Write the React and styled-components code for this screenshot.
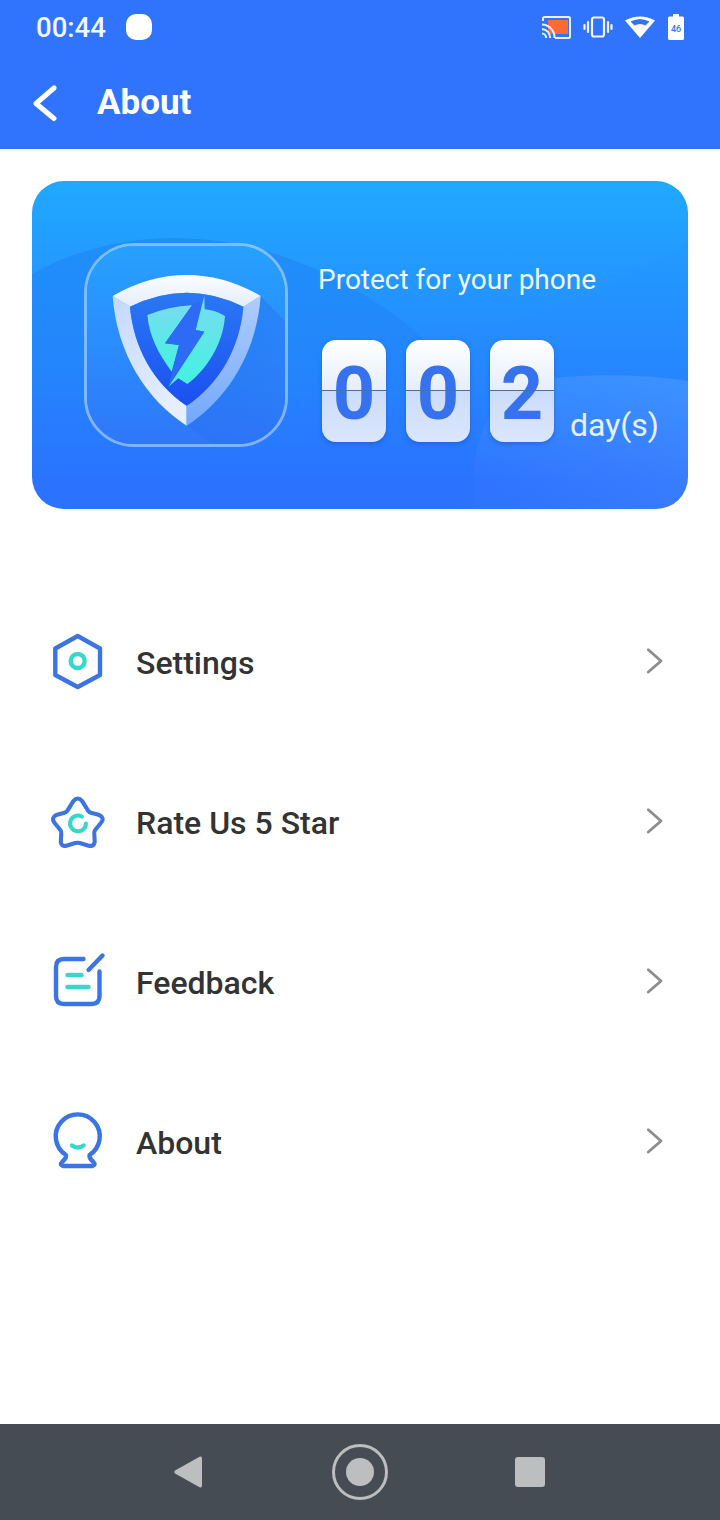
import React from 'react';
import styled, { createGlobalStyle } from 'styled-components';

const GlobalStyle = createGlobalStyle`
  html, body {
    margin: 0;
    padding: 0;
    background: #fff;
    font-family: Roboto, "Liberation Sans", sans-serif;
  }
`;

const Screen = styled.div`
  width: 720px;
  height: 1520px;
  display: flex;
  flex-direction: column;
  overflow: hidden;
  background: #fff;
`;

const Header = styled.header`
  height: 149px;
  background: #3074fe;
  color: #fff;
  display: flex;
  flex-direction: column;
`;

const StatusBar = styled.div`
  height: 56px;
  display: flex;
  align-items: center;
  padding: 0 35px 2px 36px;
  box-sizing: border-box;
`;

const Clock = styled.span`
  font-size: 27.5px;
  font-weight: 500;
  color: #f2f7ff;
`;

const Dot = styled.span`
  width: 26px;
  height: 26px;
  border-radius: 10px;
  background: #fff;
  margin-left: 20px;
`;

const StatusIcons = styled.div`
  margin-left: auto;
  display: flex;
  align-items: center;
  gap: 12px;
`;

const TitleRow = styled.div`
  height: 93px;
  display: flex;
  align-items: center;
  padding: 0 0 1px 30px;
  box-sizing: border-box;
`;

const BackIcon = styled.svg`
  display: block;
  width: 30px;
  height: 40px;
`;

const Title = styled.h1`
  margin: 0 0 0 37px;
  font-size: 35px;
  font-weight: 700;
`;

const Card = styled.section`
  position: relative;
  margin: 32px 32px 0;
  height: 328px;
  border-radius: 32px;
  overflow: hidden;
  background: linear-gradient(180deg, #20a9ff 0%, #2a72ff 92%);
  display: flex;
  padding: 62px 0 0 52px;
  box-sizing: border-box;
  flex-shrink: 0;
`;

const CardDecor = styled.svg`
  position: absolute;
  left: 0;
  top: 0;
  width: 656px;
  height: 328px;
`;

const LogoBox = styled.div`
  position: relative;
  width: 204px;
  height: 204px;
  box-sizing: border-box;
  border-radius: 50px;
  border: 3px solid rgba(255, 255, 255, 0.42);
  overflow: hidden;
  flex-shrink: 0;
`;

const Logo = styled.svg`
  display: block;
  width: 204px;
  height: 204px;
  margin: -3px;
`;

const CardBody = styled.div`
  position: relative;
  margin-left: 30px;
  padding-top: 20px;
`;

const Protect = styled.div`
  font-size: 28px;
  line-height: 34px;
  color: #eef7ff;
`;

const Counter = styled.div`
  display: flex;
  margin: 43px 0 0 4px;
`;

const Flip = styled.div`
  position: relative;
  width: 64px;
  height: 102px;
  margin-right: 20px;
  border-radius: 14px;
  background: linear-gradient(180deg, #ffffff 0%, #e6edfc 49%, #cbdcfa 49.5%, #dbe6fd 100%);
  box-shadow: 0 2px 4px rgba(20, 60, 160, 0.35);
  color: #3671ee;
  font-size: 74px;
  font-weight: 700;
  line-height: 108px;
  text-align: center;

  &::after {
    content: '';
    position: absolute;
    left: 0;
    right: 0;
    top: 50px;
    height: 1px;
    background: #4f6f9f;
  }
`;

const Days = styled.span`
  align-self: flex-end;
  margin: 0 0 -3px -4px;
  font-size: 32px;
  line-height: 40px;
  color: #e6f1ff;
`;

const Menu = styled.nav`
  margin-top: 73px;
  display: flex;
  flex-direction: column;
`;

const Row = styled.div`
  height: 160px;
  display: flex;
  align-items: center;
  padding: 0 50px 0 40px;
`;

const RowIcon = styled.svg`
  display: block;
  width: 80px;
  height: 80px;
  flex-shrink: 0;
  fill: none;
  stroke-width: 4.4;
  stroke-linecap: round;
  stroke-linejoin: round;
`;

const RowLabel = styled.span`
  margin-left: 16px;
  font-size: 32px;
  font-weight: 500;
  color: #333;
  padding-top: 2px;
`;

const RowChevron = styled.svg`
  display: block;
  margin-left: auto;
  width: 30px;
  height: 30px;
  fill: none;
  stroke: #8b8d90;
  stroke-width: 2.8;
  stroke-linecap: round;
  stroke-linejoin: round;
`;

const NavBar = styled.footer`
  margin-top: auto;
  height: 96px;
  background: #454c53;
  display: flex;
  align-items: center;
  padding-left: 173px;
`;

const NavIcon = styled.svg`
  display: block;
  fill: #bcbebf;
  margin-left: ${props => props.$offset || 0}px;
`;

const BLUE = '#3b74e3';
const TEAL = '#36d9c9';

const CastIcon = () => (
  <svg width="30" height="24" viewBox="0 0 30 24">
    <rect x="7" y="5" width="20" height="14" fill="#ff6b35" />
    <path d="M2 6V3.5A1.5 1.5 0 0 1 3.5 2h24A1.5 1.5 0 0 1 29 3.5v18a1.5 1.5 0 0 1-1.5 1.5H14" fill="none" stroke="#e9f1ff" strokeWidth="2" />
    <path d="M1 9.5a13 13 0 0 1 12.5 13.5M1 14a9 9 0 0 1 8.2 9M1 18.5a4.5 4.5 0 0 1 4.2 4.5" fill="none" stroke="#e9f1ff" strokeWidth="2" />
  </svg>
);

const VibrateIcon = () => (
  <svg width="30" height="24" viewBox="0 0 30 24" fill="none" stroke="#f0f5ff" strokeWidth="2.2" strokeLinecap="round">
    <rect x="9" y="2.5" width="12" height="19" rx="2" />
    <path d="M5 7v10M25 7v10M1.5 10v4M28.5 10v4" />
  </svg>
);

const WifiIcon = () => (
  <svg width="30" height="24" viewBox="0 0 30 24">
    <path
      d="M0 5.5Q15 -2.500 30 5.500L15 23ZM5.500 6.500L9.500 10.500Q15 7.500 20.500 10.500L24.500 6.500Q15 1.500 5.500 6.500Z"
      fill="#fff"
      fillRule="evenodd"
    />
  </svg>
);

const BatteryIcon = () => (
  <svg width="18" height="26" viewBox="0 0 18 26">
    <path d="M6 0h6v2.500h3.500A1.500 1.500 0 0 1 17 4v20.500a1.500 1.500 0 0 1-1.500 1.500h-13A1.500 1.500 0 0 1 1 24.500V4a1.500 1.500 0 0 1 1.500-1.500H6Z" fill="#fff" />
    <text x="9" y="18" textAnchor="middle" fontSize="9" fontWeight="500" fontFamily="Roboto, sans-serif" fill="#3074fe">46</text>
  </svg>
);

const Chevron = () => (
  <RowChevron viewBox="0 0 30 30">
    <path d="M8.300 2.800L21 14L8.300 25" />
  </RowChevron>
);

const SettingsIcon = () => (
  <RowIcon viewBox="0 0 80 80">
    <path d="M37.700 14L60 26.500V53L37.700 65L15.300 53V26.500Z" stroke={BLUE} />
    <circle cx="37.700" cy="39" r="7" stroke={TEAL} />
  </RowIcon>
);

const StarIcon = () => (
  <RowIcon viewBox="0 0 80 80">
    <g transform="translate(37.700 40.500) scale(0.93) translate(-37.700 -40)">
      <path d="M33 17Q37.700 11.500 42.500 17L49 27.500Q50 29 52 29.500L61 32Q67 35 63 40L56.500 48Q55 50 55.500 52L56 61Q55 66 49.500 65L40 62Q37.700 61.500 35 62L25.500 65Q20 66 19.500 61L20 52Q20.500 50 19 48L12.500 40Q9 35 14.500 32L23.500 29.500Q25.500 29 26.500 27.500Z" stroke={BLUE} />
      <path d="M42 33.500A8.500 8.500 0 1 0 46.500 41" stroke={TEAL} />
    </g>
  </RowIcon>
);

const FeedbackIcon = () => (
  <RowIcon viewBox="0 0 80 80">
    <path d="M43.500 17H24Q16 17 16 25V54Q16 62 24 62H51.500Q59.500 62 59.500 54V29.500" stroke={BLUE} />
    <path d="M48.500 28L62.500 13.500" stroke={BLUE} />
    <path d="M27.500 33H41.500M27.500 45H48.500" stroke={TEAL} />
  </RowIcon>
);

const AboutIcon = () => (
  <RowIcon viewBox="0 0 80 80">
    <g transform="translate(0 1)">
      <path d="M26 52A22 22 0 1 1 49.500 52Q49 55 53 58.500Q56.500 62 52 63H23.500Q19 62 22.500 58.500Q26.500 55 26 52Z" stroke={BLUE} />
      <path d="M32 42.500Q37.700 46.500 43.500 42.500" stroke={TEAL} />
    </g>
  </RowIcon>
);

const ShieldLogo = () => (
  <Logo viewBox="42 39 612 612">
    <defs>
      <linearGradient id="boxFill" x1="0" y1="0" x2="0" y2="1">
        <stop offset="0" stopColor="#26a2ff" />
        <stop offset="1" stopColor="#2f76fb" />
      </linearGradient>
      <linearGradient id="shadowFill" x1="0" y1="0" x2="1" y2="1">
        <stop offset="0" stopColor="#1f6fe8" stopOpacity="0.6" />
        <stop offset="1" stopColor="#2a6cf0" stopOpacity="0.15" />
      </linearGradient>
      <linearGradient id="leftFacet" x1="0" y1="0" x2="0.6" y2="1">
        <stop offset="0" stopColor="#c3d8fd" />
        <stop offset="1" stopColor="#e6efff" />
      </linearGradient>
      <linearGradient id="rightFacet" x1="0" y1="0" x2="0" y2="1">
        <stop offset="0" stopColor="#b0cdff" />
        <stop offset="1" stopColor="#72a8fb" />
      </linearGradient>
      <linearGradient id="topFacet" x1="0" y1="0" x2="0" y2="1">
        <stop offset="0" stopColor="#fbfdff" />
        <stop offset="1" stopColor="#e4edff" />
      </linearGradient>
      <linearGradient id="innerFill" x1="0" y1="0" x2="0" y2="1">
        <stop offset="0" stopColor="#2a78f5" />
        <stop offset="1" stopColor="#1c4ff0" />
      </linearGradient>
      <linearGradient id="cyanFill" x1="0" y1="0" x2="0" y2="1">
        <stop offset="0" stopColor="#78dcf0" />
        <stop offset="1" stopColor="#42f3e0" />
      </linearGradient>
    </defs>
    <rect x="42" y="39" width="612" height="612" fill="url(#boxFill)" />
    <path d="M572 198L654 282V651H440L350 587Z" fill="url(#shadowFill)" />
    <path d="M128 198C140 370 230 510 350 587V527C250 460 190 350 180 230Z" fill="url(#leftFacet)" />
    <path d="M572 198C560 370 470 510 350 587V527C450 460 510 350 520 230Z" fill="url(#rightFacet)" />
    <path d="M128 198Q235 135 350 135Q465 135 572 198L520 230Q435 188 350 188Q265 188 180 230Z" fill="url(#topFacet)" />
    <path d="M180 230Q265 188 350 188Q435 188 520 230C510 350 450 460 350 527C250 460 190 350 180 230Z" fill="url(#innerFill)" />
    <path d="M232 255Q295 230 366 226L285 340L327 345L305 425C265 370 238 320 232 255Z" fill="url(#cyanFill)" />
    <path d="M403 197L404 238Q435 240 465 258C460 340 410 420 352 462L325 445L295 470L403 305L377 300Z" fill="url(#cyanFill)" />
    <path d="M392 215L377 300L403 305L295 470L327 345L285 340L367 225Z" fill="#2d6bf6" />
  </Logo>
);

const App = () => (
  <Screen>
    <GlobalStyle />
    <Header>
      <StatusBar>
        <Clock>00:44</Clock>
        <Dot />
        <StatusIcons>
          <CastIcon />
          <VibrateIcon />
          <WifiIcon />
          <BatteryIcon />
        </StatusIcons>
      </StatusBar>
      <TitleRow>
        <BackIcon viewBox="0 0 30 40">
          <path d="M24 6L6 21.500L24 36.500" fill="none" stroke="#fff" strokeWidth="5" strokeLinecap="round" strokeLinejoin="round" />
        </BackIcon>
        <Title>About</Title>
      </TitleRow>
    </Header>

    <Card>
      <CardDecor viewBox="0 0 656 328">
        <defs>
          <linearGradient id="arcFill" x1="0" y1="0" x2="0" y2="1">
            <stop offset="0" stopColor="#1a78f0" stopOpacity="0.42" />
            <stop offset="0.85" stopColor="#1a78f0" stopOpacity="0" />
          </linearGradient>
          <linearGradient id="bandFill" x1="0" y1="0" x2="0" y2="1">
            <stop offset="0" stopColor="#1a78f0" stopOpacity="0.07" />
            <stop offset="1" stopColor="#1a78f0" stopOpacity="0" />
          </linearGradient>
          <linearGradient id="cornerFill" x1="0.1" y1="0.9" x2="0.9" y2="0.1">
            <stop offset="0" stopColor="#fff" stopOpacity="0.015" />
            <stop offset="0.6" stopColor="#fff" stopOpacity="0.07" />
            <stop offset="1" stopColor="#fff" stopOpacity="0.1" />
          </linearGradient>
        </defs>
        <path d="M391 157C470 150 580 110 656 60V240H391Z" fill="url(#bandFill)" />
        <path d="M0 93C40 70 90 57 143 57C230 57 320 95 391 157C425 195 440 270 445 328H0Z" fill="url(#arcFill)" />
        <path d="M441 328C438 270 450 205 520 197C570 192 620 194 656 200V328Z" fill="url(#cornerFill)" />
      </CardDecor>
      <LogoBox>
        <ShieldLogo />
      </LogoBox>
      <CardBody>
        <Protect>Protect for your phone</Protect>
        <Counter>
          <Flip>0</Flip>
          <Flip>0</Flip>
          <Flip>2</Flip>
          <Days>day(s)</Days>
        </Counter>
      </CardBody>
    </Card>

    <Menu>
      <Row>
        <SettingsIcon />
        <RowLabel>Settings</RowLabel>
        <Chevron />
      </Row>
      <Row>
        <StarIcon />
        <RowLabel>Rate Us 5 Star</RowLabel>
        <Chevron />
      </Row>
      <Row>
        <FeedbackIcon />
        <RowLabel>Feedback</RowLabel>
        <Chevron />
      </Row>
      <Row>
        <AboutIcon />
        <RowLabel>About</RowLabel>
        <Chevron />
      </Row>
    </Menu>

    <NavBar>
      <NavIcon width="30" height="34" viewBox="0 0 30 34">
        <path d="M27 1.500Q29 1 29 3.500V30.500Q29 33 27 32.500L2 18.500Q0.500 17 2 15.500Z" />
      </NavIcon>
      <NavIcon $offset={128} width="58" height="58" viewBox="0 0 58 58">
        <circle cx="29" cy="29" r="26.500" fill="none" stroke="#bcbebf" strokeWidth="3" />
        <circle cx="29" cy="29" r="14" />
      </NavIcon>
      <NavIcon $offset={126} width="30" height="30" viewBox="0 0 30 30">
        <rect width="30" height="30" rx="3" />
      </NavIcon>
    </NavBar>
  </Screen>
);

export default App;
